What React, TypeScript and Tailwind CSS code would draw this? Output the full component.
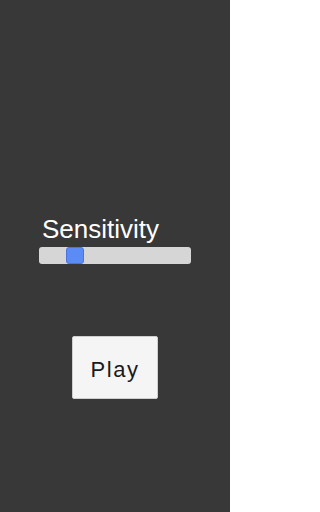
import React, { useState } from "react";

const App: React.FC = () => {
	const [sensitivity] = useState(0.2);

	return (
		<div
			className="w-[230px] h-[512px] bg-[#383838] flex flex-col items-center pt-[214px]"
			style={{ fontFamily: '"Liberation Sans", Arial, sans-serif' }}
		>
			<div className="w-[152px] flex flex-col">
				<div className="pl-[3px] text-[26px] leading-[30px] text-white">Sensitivity</div>

				{/* slider track, thumb sits by padding */}
				<div className="mt-[3px] w-[152px] h-[17px] rounded-[3px] bg-[#d6d6d6] flex">
					<div className="h-full" style={{ width: `${sensitivity * 135}px` }} />
					<div className="w-[18px] h-[17px] rounded-[3px] bg-[#5b8cf6] border border-[#4a74d8]" />
				</div>
			</div>

			<button className="mt-[72px] w-[86px] h-[63px] pt-[4px] bg-[#f5f5f5] border border-[#cfcfcf] rounded-[2px] text-[22px] tracking-[1.5px] text-[#1a1a1a] flex items-center justify-center">
				Play
			</button>
		</div>
	);
};

export default App;
